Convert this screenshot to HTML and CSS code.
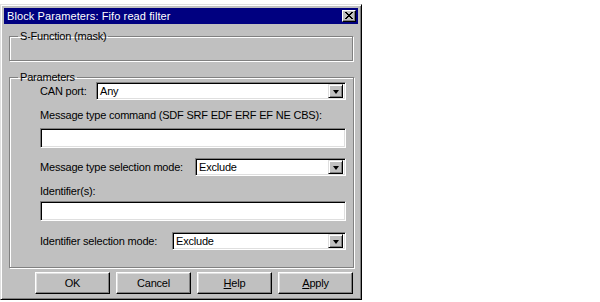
FILE: index.html
```html
<!DOCTYPE html>
<html>
<head>
<meta charset="utf-8">
<link rel="stylesheet" href="styles.css">
</head>
<body>
<div class="window">
  <div class="titlebar">
    <span class="title">Block Parameters: Fifo read filter</span>
    <span class="close"><svg width="8" height="7" viewBox="0 0 8 7"><path d="M0 0h2v1h1v1h2V1h1V0h2v1H7v1H6v1H5v1h1v1h1v1h1v1H6V6H5V5H3v1H2v1H0V6h1V5h1V4h1V3H2V2H1V1H0z" fill="#000"/></svg></span>
  </div>
  <div class="content">
    <fieldset class="group group-mask">
      <legend>S-Function (mask)</legend>
    </fieldset>
    <fieldset class="group group-params">
      <legend>Parameters</legend>
      <div class="params">
        <div class="row row-can">
          <span class="lbl">CAN port:</span>
          <div class="select sel-can"><span class="val">Any</span><span class="drop"><i class="tri"></i></span></div>
        </div>
        <div class="lbl lbl-cmd">Message type command (SDF SRF EDF ERF EF NE CBS):</div>
        <div class="input input-cmd"></div>
        <div class="row row-mode">
          <span class="lbl">Message type selection mode:</span>
          <div class="select sel-mode"><span class="val">Exclude</span><span class="drop"><i class="tri"></i></span></div>
        </div>
        <div class="lbl lbl-id">Identifier(s):</div>
        <div class="input input-id"></div>
        <div class="row row-idmode">
          <span class="lbl">Identifier selection mode:</span>
          <div class="select sel-idmode"><span class="val">Exclude</span><span class="drop"><i class="tri"></i></span></div>
        </div>
      </div>
    </fieldset>
    <div class="buttons">
      <div class="btn">OK</div>
      <div class="btn">Cancel</div>
      <div class="btn"><u>H</u>elp</div>
      <div class="btn"><u>A</u>pply</div>
    </div>
  </div>
</div>
</body>
</html>
```
FILE: styles.css
```css
html, body {
  margin: 0;
  padding: 0;
  background: #ffffff;
}
body {
  font-family: "Liberation Sans", Arial, sans-serif;
  font-size: 11px;
  letter-spacing: -0.2px;
  color: #000;
}
.window {
  box-sizing: border-box;
  width: 362px;
  height: 296px;
  margin-top: 4px;
  background: #c0c0c0;
  border-top: 1px solid #dfdfdf;
  border-left: 1px solid #dfdfdf;
  border-right: 1px solid #000;
  border-bottom: 1px solid #000;
  box-shadow: inset 1px 1px 0 #fff, inset -1px -1px 0 #808080;
  padding: 3px 3px 0 3px;
  display: flex;
  flex-direction: column;
}
.titlebar {
  height: 16px;
  background: #000080;
  color: #fff;
  display: flex;
  align-items: center;
  justify-content: space-between;
  padding: 0 2px 0 3px;
}
.title {
  font-size: 11px;
  letter-spacing: 0.1px;
  line-height: 16px;
}
.close {
  box-sizing: border-box;
  width: 14px;
  height: 12px;
  background: #c0c0c0;
  border-top: 1px solid #fff;
  border-left: 1px solid #fff;
  border-right: 1px solid #000;
  border-bottom: 1px solid #000;
  box-shadow: inset -1px -1px 0 #808080;
  display: flex;
  align-items: center;
  justify-content: center;
  padding: 0 1px 1px 0;
}
.content {
  display: flex;
  flex-direction: column;
  padding: 6px 5px 0 5px;
}
.group {
  margin: 0;
  border: 1px solid #808080;
  box-shadow: 1px 1px 0 #fff, inset 1px 1px 0 #fff;
  padding: 0;
  box-sizing: border-box;
}
.group legend {
  padding: 0 2px;
  margin-left: 8px;
  line-height: 12px;
}
.group-mask {
  height: 31px;
}
.group-params {
  margin-top: 10px;
  height: 197px;
}
.params {
  display: flex;
  flex-direction: column;
  padding: 0 7px 0 30px;
}
.row {
  display: flex;
  align-items: center;
}
.lbl {
  line-height: 13px;
  white-space: nowrap;
}
.select {
  box-sizing: border-box;
  height: 18px;
  background: #fff;
  border-top: 1px solid #808080;
  border-left: 1px solid #808080;
  border-right: 1px solid #fff;
  border-bottom: 1px solid #fff;
  box-shadow: inset 1px 1px 0 #000, inset -1px -1px 0 #dfdfdf;
  display: flex;
  align-items: center;
  padding: 2px;
}
.select .val {
  flex: 1;
  padding-left: 1px;
  line-height: 13px;
}
.drop {
  box-sizing: border-box;
  width: 15px;
  height: 14px;
  background: #c0c0c0;
  border-top: 1px solid #dfdfdf;
  border-left: 1px solid #dfdfdf;
  border-right: 1px solid #000;
  border-bottom: 1px solid #000;
  box-shadow: inset 1px 1px 0 #fff, inset -1px -1px 0 #808080;
  display: flex;
  align-items: center;
  justify-content: center;
}
.tri {
  width: 0;
  height: 0;
  border-left: 3px solid transparent;
  border-right: 3px solid transparent;
  border-top: 4px solid #000;
  margin-top: 1px;
}
.row-can {
  margin-top: -1px;
}
.row-can .lbl {
  width: 56px;
}
.sel-can {
  width: 250px;
}
.lbl-cmd {
  margin-top: 9px;
}
.input {
  box-sizing: border-box;
  height: 20px;
  width: 306px;
  background: #fff;
  border-top: 1px solid #808080;
  border-left: 1px solid #808080;
  border-right: 1px solid #fff;
  border-bottom: 1px solid #fff;
  box-shadow: inset 1px 1px 0 #000, inset -1px -1px 0 #dfdfdf;
}
.input-cmd {
  margin-top: 6px;
}
.row-mode {
  margin-top: 10px;
}
.row-mode .lbl {
  width: 155px;
}
.sel-mode {
  width: 151px;
}
.lbl-id {
  margin-top: 9px;
}
.input-id {
  margin-top: 3px;
}
.row-idmode {
  margin-top: 11px;
}
.row-idmode .lbl {
  width: 132px;
}
.sel-idmode {
  width: 174px;
}
.buttons {
  display: flex;
  gap: 6px;
  padding-left: 26px;
  margin-top: 4px;
}
.btn {
  box-sizing: border-box;
  width: 76px;
  height: 22px;
  border-top: 1px solid #fff;
  border-left: 1px solid #fff;
  border-right: 1px solid #000;
  border-bottom: 1px solid #000;
  box-shadow: inset -1px -1px 0 #808080, inset 1px 1px 0 #dfdfdf;
  display: flex;
  align-items: center;
  justify-content: center;
  line-height: 13px;
}
```
